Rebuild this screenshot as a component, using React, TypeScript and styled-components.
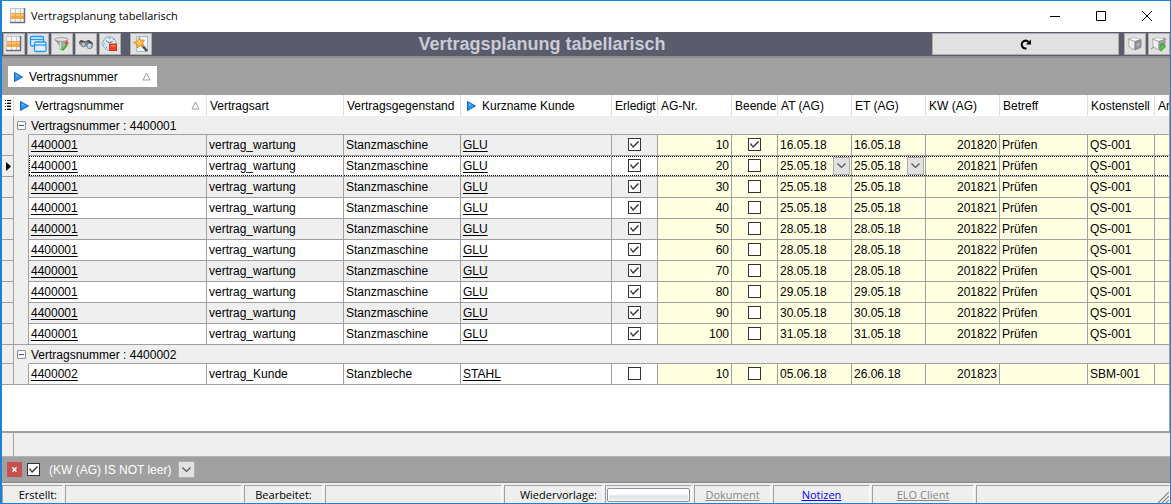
import React from 'react';
import styled, { createGlobalStyle, css } from 'styled-components';

const GRID_FONT = '"Liberation Sans", Arial, sans-serif';
const UI_FONT = '"Open Sans", "Noto Sans", sans-serif';
const LINE = '#a0a0a0';
const FACE = '#efefef';
const YELLOW = '#ffffe1';

const GlobalStyle = createGlobalStyle`
  *, *::before, *::after { box-sizing: border-box; }
  body { margin: 0; background: #fff; }
  button, input, select { font: inherit; color: inherit; margin: 0; }
`;

const Window = styled.div`
  display: flex;
  flex-direction: column;
  min-height: 100vh;
  border: 1px solid #1a82d6;
  border-left-width: 2px;
  background: #fff;
  color: #000;
  font: 12px/16px ${GRID_FONT};
`;

const TitleBar = styled.header`
  display: flex;
  align-items: center;
  height: 31px;
  padding: 0 0 2px 8px;
  font: 11px/16px ${UI_FONT};
`;

const TitleText = styled.h1`
  flex: 1;
  margin: 0 0 0 5px;
  font: inherit;
`;

const CaptionButton = styled.button`
  display: grid;
  place-items: center;
  width: 46px;
  height: 28px;
  padding: 0;
  border: 0;
  background: none;
`;

const Toolbar = styled.div`
  display: flex;
  align-items: center;
  gap: 2px;
  height: 24px;
  padding-left: 1px;
  background: #5a5c6c;
`;

const ToolButton = styled.button<{ $wide?: boolean; $apart?: boolean }>`
  display: grid;
  place-items: center;
  width: ${(p) => (p.$wide ? 187 : 22)}px;
  height: 22px;
  margin-left: ${(p) => (p.$apart ? 7 : 0)}px;
  margin-right: ${(p) => (p.$wide ? 3 : 0)}px;
  padding: 0;
  border: 1px solid #adadad;
  background: #e1e1e1;
`;

const ToolbarTitle = styled.h2`
  flex: 1;
  margin: 0;
  text-align: center;
  color: #c9cbd8;
  font: bold 18px/22px ${GRID_FONT};
`;

const GroupPanel = styled.div`
  height: 39px;
  padding: 8px 6px;
  border-top: 2px solid #8b8d91;
  background: ${LINE};
`;

const HeaderContent = styled.div`
  display: flex;
  align-items: center;
  gap: 6px;
  height: 21px;
  padding: 0 6px;
`;

const GroupChip = styled(HeaderContent)`
  width: 149px;
  background: #fff;
`;

const HeaderLabel = styled.span`
  flex: 1;
`;

const GridArea = styled.main`
  flex: 1;
  overflow: hidden;
  border-right: 1px solid ${LINE};
`;

const Grid = styled.table`
  width: 100%;
  table-layout: fixed;
  border-collapse: separate;
  border-spacing: 0;
`;

const HeadCell = styled.th<{ $rich?: boolean }>`
  height: 21px;
  padding: 0 0 0 ${(p) => (p.$rich ? 0 : 3)}px;
  border-right: 1px solid #e0e0e0;
  font-weight: normal;
  text-align: left;
  white-space: nowrap;
  overflow: hidden;
  &:last-child { border-right: 0; }
`;

const Indicator = styled.td`
  padding: 0 0 0 3px;
  border-right: 1px solid ${LINE};
  border-bottom: 1px solid ${LINE};
  background: ${FACE};
  line-height: 0;
`;

const Indent = styled.td<{ $group?: boolean; $last?: boolean }>`
  padding: 0 0 0 3px;
  background: ${FACE};
  border-right: 1px solid ${(p) => (p.$group ? FACE : LINE)};
  border-bottom: ${(p) => (p.$last ? `1px solid ${LINE}` : '0')};
`;

const GroupCell = styled.td`
  height: 19px;
  padding: 2px 0 0 2px;
  border-bottom: 1px solid ${LINE};
  background: ${FACE};
`;

const ExpandButton = styled.button`
  display: grid;
  place-items: center;
  width: 9px;
  height: 9px;
  padding: 0;
  border: 1px solid #8f8f8f;
  border-radius: 1px;
  background: #fafafa;
  &::after {
    content: '';
    width: 5px;
    height: 1px;
    background: #3c5aa0;
  }
`;

const Cell = styled.td<{ $shade: string; $align?: string; $focus?: boolean; $first?: boolean }>`
  height: 21px;
  padding: 0 2px;
  border-right: 1px solid ${LINE};
  border-bottom: 1px solid ${LINE};
  background-color: ${(p) => p.$shade};
  text-align: ${(p) => p.$align ?? 'left'};
  white-space: nowrap;
  overflow: hidden;
  &:last-child { border-right: 0; }
  ${(p) =>
    p.$focus &&
    css`
      background-image: repeating-linear-gradient(90deg, #000 0 1px, transparent 1px 2px),
        repeating-linear-gradient(90deg, #000 0 1px, transparent 1px 2px),
        repeating-linear-gradient(180deg, #000 0 1px, transparent 1px 2px);
      background-size: 100% 1px, 100% 1px, ${p.$first ? '1px 100%' : '0 0'};
      background-position: top left, bottom left, top left;
      background-repeat: no-repeat;
    `}
`;

const RecordLink = styled.a`
  color: #000;
  text-decoration: underline;
  text-underline-offset: 2px;
`;

const Check = styled.input.attrs({ type: 'checkbox' })`
  appearance: none;
  display: block;
  flex: none;
  width: 13px;
  height: 13px;
  border: 1px solid #333;
  background: #fff;
  &:checked::after {
    content: '';
    display: block;
    width: 11px;
    height: 11px;
    background: #333;
    clip-path: polygon(1px 5px, 2px 4px, 4px 7px, 9px 2px, 10px 3px, 4px 9px);
  }
`;

const CellCheck = styled(Check)`
  margin: 0 auto 1px;
`;

const DateField = styled.div`
  position: relative;
  display: flex;
  height: 18px;
  margin-right: -1px;
`;

const DateSelect = styled.select`
  flex: 1;
  width: 100%;
  appearance: none;
  padding: 0;
  border: 0;
  background: none;
`;

const DropMark = styled.span`
  position: absolute;
  top: 0;
  right: 0;
  display: grid;
  place-items: center;
  width: 17px;
  height: 18px;
  border: 1px solid #adadad;
  background: #e1e1e1;
  pointer-events: none;
`;

const FooterRow = styled.div`
  height: 26px;
  padding-left: 11px;
  border-top: 2px solid ${LINE};
  border-bottom: 1px solid #b4b4b4;
  background: ${FACE};
  &::before {
    content: '';
    display: block;
    height: 100%;
    border-left: 1px solid ${LINE};
  }
`;

const FilterBar = styled.div`
  display: flex;
  align-items: center;
  height: 26px;
  padding-left: 5px;
  border-bottom: 1px solid #84888c;
  background: ${LINE};
  color: #fff;
`;

const ClearButton = styled.button`
  display: grid;
  place-items: center;
  width: 15px;
  height: 15px;
  margin-right: 5px;
  padding: 0;
  border: 0;
  background: #c75050;
`;

const FilterLabel = styled.label`
  display: flex;
  align-items: center;
  gap: 9px;
  margin-right: 7px;
`;

const DropButton = styled.button`
  display: grid;
  place-items: center;
  width: 17px;
  height: 17px;
  padding: 0;
  border: 1px solid #adadad;
  background: #e1e1e1;
`;

const StatusBar = styled.footer`
  display: flex;
  gap: 2px;
  height: 20px;
  padding-top: 2px;
  background: ${FACE};
  font: 11px/16px ${UI_FONT};
`;

const StatusPanel = styled.div<{ $width?: number; $center?: boolean }>`
  ${(p) => (p.$width ? `flex: none; width: ${p.$width}px;` : 'flex: 1;')}
  display: flex;
  align-items: center;
  justify-content: ${(p) => (p.$center ? 'center' : 'flex-end')};
  padding: 0 ${(p) => (p.$center ? 1 : 5)}px 0 1px;
  border-left: 1px solid ${LINE};
  border-top: 1px solid ${LINE};
  border-right: 1px solid #fff;
  white-space: nowrap;
  overflow: hidden;
`;

const GripPanel = styled(StatusPanel)`
  align-items: flex-end;
  padding: 0;
`;

const StatusLink = styled.a<{ $muted?: boolean }>`
  color: ${(p) => (p.$muted ? '#868686' : '#0000ff')};
  text-decoration: underline;
`;

const ReminderButton = styled.button`
  flex: 1;
  height: 14px;
  margin-right: -4px;
  padding: 0;
  border: 1px solid #8a919c;
  border-radius: 2px;
  background: linear-gradient(#fff 0 40%, #dfe3ea 60%, #eef1f5);
  box-shadow: inset 0 0 0 1px #fff;
`;

/* ---------- Icons ---------- */

const TableIcon = () => (
  <svg width="16" height="16" viewBox="0 0 16 16" aria-hidden="true">
    <path d="M1 1h14v14H1z" fill="#f6f6fb" />
    <path d="M1 5h13v6H1z" fill="#f9a93c" />
    <path d="M1 6h13v2H1z" fill="#fdc478" />
    <path d="M0 .5h15M.5 0v15M5.500 1v4M10.500 1v4M5.500 11v4M10.500 11v4" stroke="#c3c5d4" fill="none" />
    <path d="M5.500 5v6M10.500 5v6" stroke="#e0a75c" />
    <path d="M14.500 0v15M0 14.500h15" stroke="#6f6f78" strokeWidth="1.500" fill="none" />
  </svg>
);

const WindowsIcon = () => (
  <svg width="18" height="18" viewBox="0 0 18 18" aria-hidden="true" fill="#e4eef6" stroke="#1e9bff" strokeWidth="1.300">
    <rect x="1.500" y="1.500" width="13" height="9.500" rx="1.500" />
    <path d="M1.500 4.500h13" />
    <rect x="5.500" y="7" width="11.500" height="9.500" rx="1.500" />
    <path d="M5.500 10h11.500" />
  </svg>
);

const FunnelIcon = () => (
  <svg width="16" height="16" viewBox="0 0 16 16" aria-hidden="true">
    <path d="M1 4l5 6v3.500h2.500V10L14 4z" fill="#a9aaa6" stroke="#85867f" strokeWidth=".5" />
    <path d="M6.500 6v7" stroke="#d9dad6" strokeWidth="1.300" fill="none" />
    <ellipse cx="7.500" cy="3.500" rx="6.700" ry="1.800" fill="#e6e7e4" stroke="#8b8c88" strokeWidth=".8" />
    <path d="M8 14l4.500-5.500" stroke="#2fb03a" strokeWidth="3" />
    <path d="M8 13l4-5" stroke="#8ae682" />
    <path d="M12 8.500l1.500-3" stroke="#e04848" strokeWidth="3" />
  </svg>
);

const BinocularsIcon = () => (
  <svg width="16" height="16" viewBox="0 0 16 16" aria-hidden="true">
    <path d="M1 6l2-2 4 1 4-1 4 3v4l-3 2-4-3-3 1-4-3z" fill="#82868b" />
    <path d="M1 6l2-2 4 1.500-1 1.500zM8 5l3-1 4 3-2 1z" fill="#4b5157" />
    <circle cx="5.500" cy="8.500" r="2.300" fill="#b2bac2" stroke="#666d74" strokeWidth=".8" />
    <circle cx="11.500" cy="10" r="2.700" fill="#b4cfe2" stroke="#667787" strokeWidth=".8" />
    <path d="M10.500 9.500l2-1" stroke="#f5fbff" strokeWidth="1.200" />
    <path d="M4.500 8l1-.7" stroke="#f5fbff" />
  </svg>
);

const ClockIcon = () => (
  <svg width="16" height="16" viewBox="0 0 16 16" aria-hidden="true">
    <circle cx="7.500" cy="7.500" r="6.700" fill="#d7ebfa" stroke="#8fa8bd" />
    <path d="M4 4.500l3 2.500 3.500-1.500" stroke="#5a7186" fill="none" />
    <path d="M7.500 1.500v1.500M2 8h1M12 3l-1 1M4 12l1-1" stroke="#7b93a6" />
    <rect x="7.500" y="8" width="7" height="6.500" fill="#f23c1e" stroke="#d0361f" />
    <path d="M8.500 9h5v2h-5z" fill="#ff7347" />
  </svg>
);

const WandIcon = () => (
  <svg width="18" height="18" viewBox="0 0 18 18" aria-hidden="true">
    <path d="M4.500 1.500h11v15h-11z" fill="#e9f1fb" stroke="#a5b9d6" />
    <path d="M12 3h2v3h-2z" fill="#fff" />
    <path d="M9.500 9.500l5.500 6.500" stroke="#4c433e" strokeWidth="2.600" />
    <path d="M10.500 9.500l5 6" stroke="#9a8f86" strokeWidth=".7" />
    <path d="M7.500 2l1 3.300L12.500 5l-2 3 1.500 3.500-3.500-1L5 13l.2-3.700L1.500 7.500l4-1.200z" fill="#ffbb3e" stroke="#dd8a26" strokeWidth=".9" />
    <path d="M7.200 5l.5 2-2 1" stroke="#fff0ac" fill="none" />
  </svg>
);

const ReloadIcon = () => (
  <svg width="12" height="12" viewBox="0 0 12 12" aria-hidden="true">
    <path d="M6.500 10.500C1.500 11 .3 5 3.700 3.200c2-1 4-.2 5 1.300" stroke="#000" strokeWidth="2" fill="none" />
    <path d="M11 1.500v5H6z" fill="#000" />
  </svg>
);

const BoxIcon = ({ active }: { active?: boolean }) => (
  <svg width="16" height="16" viewBox="0 0 16 16" aria-hidden="true" strokeLinejoin="round">
    <path d="M1.500 3l5.500-1.500L14 3.500 8 5.500z" fill="#fafafa" stroke="#b5b5b5" strokeWidth=".8" />
    <path d="M1.500 3L8 5.500v8.500l-6-3z" fill="#e6e6e6" stroke="#a5a5a5" strokeWidth=".8" />
    <path d="M8 5.500l6-2v8L8 14z" fill={active ? '#a5a8a6' : '#8e8e8e'} stroke="#8a8a8a" strokeWidth=".8" />
    <path d="M3.500 5v5.500M5.800 6v5.500" stroke="#fff" />
    <path d="M9.500 7.500l3-1v3.500l-3 1z" fill={active ? '#777c79' : '#b2b2b2'} />
    {active && <path d="M0 13l3-2M12 1.500l3.500 2" stroke="#888" />}
    {active && <path d="M9 8.500l5.500 1.500L10 15.500z" fill="#52c63c" stroke="#39a830" strokeWidth=".7" />}
  </svg>
);

const BlueArrow = () => (
  <svg width="9" height="10" viewBox="0 0 9 10" aria-hidden="true">
    <path d="M.5.500L8.500 5l-8 4.500z" fill="#2a93f0" stroke="#1769bd" />
    <path d="M2 2.500l3 2H2z" fill="#6bc0ff" />
  </svg>
);

const SortMark = () => (
  <svg width="9" height="9" viewBox="0 0 9 9" aria-hidden="true">
    <path d="M4.500 1L8 8H1z" fill="none" stroke="#9a9a9a" />
  </svg>
);

const Chevron = () => (
  <svg width="9" height="6" viewBox="0 0 9 6" aria-hidden="true">
    <path d="M.5.500l4 4 4-4" fill="none" stroke="#555" strokeWidth="1.200" />
  </svg>
);

const ListIcon = () => (
  <svg width="7" height="10" viewBox="0 0 7 10" aria-hidden="true" shapeRendering="crispEdges">
    <path d="M2 .5h4M2 3.500h4M2 6.500h4M2 9.500h4M0 .5h1M0 3.500h1M0 6.500h1M0 9.500h1" stroke="#000" />
    <path d="M2 2h4M2 5h4M2 8h4" stroke="#999" />
  </svg>
);

/* ---------- Data ---------- */

type Order = {
  contract: string;
  kind: string;
  subject: string;
  customer: string;
  done: boolean;
  no: number;
  ended: boolean;
  start: string;
  end: string;
  week: string;
  topic: string;
  cost: string;
};

const maintenance = (no: number, start: string, week: string, ended = false): Order => ({
  contract: '4400001',
  kind: 'vertrag_wartung',
  subject: 'Stanzmaschine',
  customer: 'GLU',
  done: true,
  no,
  ended,
  start,
  end: start,
  week,
  topic: 'Prüfen',
  cost: 'QS-001',
});

const groups: { id: string; rows: Order[] }[] = [
  {
    id: '4400001',
    rows: [
      maintenance(10, '16.05.18', '201820', true),
      maintenance(20, '25.05.18', '201821'),
      maintenance(30, '25.05.18', '201821'),
      maintenance(40, '25.05.18', '201821'),
      maintenance(50, '28.05.18', '201822'),
      maintenance(60, '28.05.18', '201822'),
      maintenance(70, '28.05.18', '201822'),
      maintenance(80, '29.05.18', '201822'),
      maintenance(90, '30.05.18', '201822'),
      maintenance(100, '31.05.18', '201822'),
    ],
  },
  {
    id: '4400002',
    rows: [
      {
        contract: '4400002',
        kind: 'vertrag_Kunde',
        subject: 'Stanzbleche',
        customer: 'STAHL',
        done: false,
        no: 10,
        ended: false,
        start: '05.06.18',
        end: '26.06.18',
        week: '201823',
        topic: '',
        cost: 'SBM-001',
      },
    ],
  },
];

const columnWidths = [12, 15, 178, 137, 117, 151, 46, 74, 46, 74, 74, 74, 88, 67];
const FOCUSED = 20;

const DateCell = ({ value, label, editing }: { value: string; label: string; editing: boolean }) =>
  editing ? (
    <DateField>
      <DateSelect aria-label={label} defaultValue={value}>
        <option>{value}</option>
      </DateSelect>
      <DropMark>
        <Chevron />
      </DropMark>
    </DateField>
  ) : (
    <>{value}</>
  );

const OrderRow = ({ row, shaded, last }: { row: Order; shaded: boolean; last: boolean }) => {
  const focus = row.no === FOCUSED;
  const base = { $shade: shaded ? FACE : '#fff', $focus: focus };
  const task = { $shade: YELLOW, $focus: focus };
  return (
    <tr>
      <Indicator>
        {focus && (
          <svg width="6" height="9" viewBox="0 0 6 9" aria-hidden="true">
            <path d="M1 0l5 4.500L1 9z" />
          </svg>
        )}
      </Indicator>
      <Indent $last={last} />
      <Cell {...base} $first>
        <RecordLink href="#vertrag">{row.contract}</RecordLink>
      </Cell>
      <Cell {...base}>{row.kind}</Cell>
      <Cell {...base}>{row.subject}</Cell>
      <Cell {...base}>
        <RecordLink href="#kunde">{row.customer}</RecordLink>
      </Cell>
      <Cell {...base}>
        <CellCheck aria-label="Erledigt" defaultChecked={row.done} />
      </Cell>
      <Cell {...task} $align="right">{row.no}</Cell>
      <Cell {...task}>
        <CellCheck aria-label="Beendet" defaultChecked={row.ended} />
      </Cell>
      <Cell {...task}>
        <DateCell value={row.start} label="AT (AG)" editing={focus} />
      </Cell>
      <Cell {...task}>
        <DateCell value={row.end} label="ET (AG)" editing={focus} />
      </Cell>
      <Cell {...task} $align="right">{row.week}</Cell>
      <Cell {...task}>{row.topic}</Cell>
      <Cell {...task}>{row.cost}</Cell>
      <Cell {...task} />
    </tr>
  );
};

export default function App() {
  return (
    <Window>
      <GlobalStyle />
      <TitleBar>
        <TableIcon />
        <TitleText>Vertragsplanung tabellarisch</TitleText>
        <CaptionButton aria-label="Minimieren">
          <svg width="10" height="10" viewBox="0 0 10 10"><path d="M0 5.500h10" stroke="#000" /></svg>
        </CaptionButton>
        <CaptionButton aria-label="Maximieren">
          <svg width="10" height="10" viewBox="0 0 10 10"><path d="M.5.500h9v9h-9z" stroke="#000" fill="none" /></svg>
        </CaptionButton>
        <CaptionButton aria-label="Schließen">
          <svg width="10" height="10" viewBox="0 0 10 10"><path d="M0 0l10 10M10 0L0 10" stroke="#000" /></svg>
        </CaptionButton>
      </TitleBar>

      <Toolbar>
        <ToolButton aria-label="Tabelle"><TableIcon /></ToolButton>
        <ToolButton aria-label="Fenster"><WindowsIcon /></ToolButton>
        <ToolButton aria-label="Filter"><FunnelIcon /></ToolButton>
        <ToolButton aria-label="Suchen"><BinocularsIcon /></ToolButton>
        <ToolButton aria-label="Zeit"><ClockIcon /></ToolButton>
        <ToolButton aria-label="Assistent" $apart><WandIcon /></ToolButton>
        <ToolbarTitle>Vertragsplanung tabellarisch</ToolbarTitle>
        <ToolButton aria-label="Aktualisieren" $wide><ReloadIcon /></ToolButton>
        <ToolButton aria-label="Paket"><BoxIcon /></ToolButton>
        <ToolButton aria-label="Paket starten"><BoxIcon active /></ToolButton>
      </Toolbar>

      <GroupPanel>
        <GroupChip>
          <BlueArrow />
          <HeaderLabel>Vertragsnummer</HeaderLabel>
          <SortMark />
        </GroupChip>
      </GroupPanel>

      <GridArea>
        <Grid>
          <colgroup>
            {columnWidths.map((width, i) => (
              <col key={i} width={width} />
            ))}
            <col />
          </colgroup>
          <thead>
            <tr>
              <HeadCell aria-label="Spalten"><ListIcon /></HeadCell>
              <HeadCell colSpan={2} $rich>
                <HeaderContent>
                  <BlueArrow />
                  <HeaderLabel>Vertragsnummer</HeaderLabel>
                  <SortMark />
                </HeaderContent>
              </HeadCell>
              <HeadCell>Vertragsart</HeadCell>
              <HeadCell>Vertragsgegenstand</HeadCell>
              <HeadCell $rich>
                <HeaderContent>
                  <BlueArrow />
                  <HeaderLabel>Kurzname Kunde</HeaderLabel>
                </HeaderContent>
              </HeadCell>
              <HeadCell>Erledigt</HeadCell>
              <HeadCell>AG-Nr.</HeadCell>
              <HeadCell>Beende</HeadCell>
              <HeadCell>AT (AG)</HeadCell>
              <HeadCell>ET (AG)</HeadCell>
              <HeadCell>KW (AG)</HeadCell>
              <HeadCell>Betreff</HeadCell>
              <HeadCell>Kostenstell</HeadCell>
              <HeadCell>Ar</HeadCell>
            </tr>
          </thead>
          {groups.map((group, g) => (
            <tbody key={group.id}>
              <tr>
                <Indicator />
                <Indent $group>
                  <ExpandButton aria-label="Gruppe zuklappen" />
                </Indent>
                <GroupCell colSpan={13}>Vertragsnummer : {group.id}</GroupCell>
              </tr>
              {group.rows.map((row, i) => (
                <OrderRow
                  key={row.no}
                  row={row}
                  shaded={(g + i) % 2 === 0}
                  last={i === group.rows.length - 1}
                />
              ))}
            </tbody>
          ))}
        </Grid>
      </GridArea>

      <FooterRow />

      <FilterBar>
        <ClearButton aria-label="Filter entfernen">
          <svg width="5" height="5" viewBox="0 0 5 5"><path d="M.5.500l4 4M4.500.500l-4 4" stroke="#fff" strokeWidth="1.500" /></svg>
        </ClearButton>
        <FilterLabel>
          <Check defaultChecked />
          (KW (AG) IS NOT leer)
        </FilterLabel>
        <DropButton aria-label="Filterverlauf"><Chevron /></DropButton>
      </FilterBar>

      <StatusBar>
        <StatusPanel $width={61}>Erstellt:</StatusPanel>
        <StatusPanel $width={177} />
        <StatusPanel $width={79} $center>Bearbeitet:</StatusPanel>
        <StatusPanel $width={177} />
        <StatusPanel $width={99}>Wiedervorlage:</StatusPanel>
        <StatusPanel $width={87}>
          <ReminderButton aria-label="Wiedervorlage" />
        </StatusPanel>
        <StatusPanel $width={77} $center><StatusLink $muted href="#dokument">Dokument</StatusLink></StatusPanel>
        <StatusPanel $width={97} $center><StatusLink href="#notizen">Notizen</StatusLink></StatusPanel>
        <StatusPanel $width={102} $center><StatusLink $muted href="#elo">ELO Client</StatusLink></StatusPanel>
        <GripPanel>
          <svg width="12" height="12" viewBox="0 0 12 12" aria-hidden="true">
            <path d="M1 12L12 1M5 12l7-7M9 12l3-3" stroke="#8a8a8a" strokeWidth="1.200" />
          </svg>
        </GripPanel>
      </StatusBar>
    </Window>
  );
}
